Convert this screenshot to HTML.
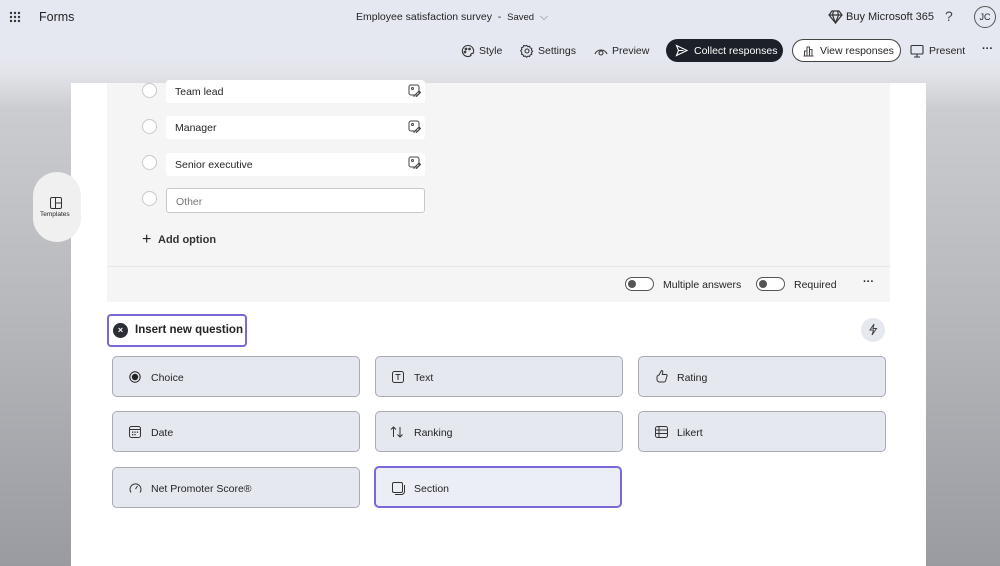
<!DOCTYPE html>
<html><head><meta charset="utf-8"><style>
*{box-sizing:border-box;margin:0;padding:0}
body{width:1000px;height:566px;overflow:hidden;font-family:"Liberation Sans",sans-serif;color:#242424;position:relative;background:linear-gradient(#e6e8f1 0,#e6e8f1 55px,#e2e3e8 75px,#cbccd0 110px,#b8b9bd 300px,#9a9ba1 566px)}
.abs{position:absolute}
.t{font-size:11px;white-space:nowrap}
.card{left:71px;top:83px;width:855px;height:483px;background:#fff}
.q{left:107px;top:83px;width:783px;height:219px;background:#f5f5f5}
.opt{left:166px;width:259px;height:23px;background:#fff;font-size:10.5px;padding:6px 9px;border-radius:3px}
.rad{left:142px;width:15px;height:15px;border:1px solid #c8c8c8;border-radius:50%;background:#fff}
.btn{width:248px;height:41px;background:#e6e8f0;border:1px solid #a9abb2;border-radius:5px;font-size:10.5px;padding:15px 0 0 38px}
.ic{position:absolute;left:16px;top:14px}
.tog{width:29px;height:14px;border:1px solid #555;border-radius:8px;background:#fff}
.tog:after{content:"";position:absolute;left:2px;top:2px;width:8px;height:8px;border-radius:50%;background:#555}
</style></head><body>
<svg class="abs" style="left:9px;top:11px" width="12" height="12"><g fill="#333"><circle cx="2" cy="2" r="1.2"/><circle cx="6" cy="2" r="1.2"/><circle cx="10" cy="2" r="1.2"/><circle cx="2" cy="6" r="1.2"/><circle cx="6" cy="6" r="1.2"/><circle cx="10" cy="6" r="1.2"/><circle cx="2" cy="10" r="1.2"/><circle cx="6" cy="10" r="1.2"/><circle cx="10" cy="10" r="1.2"/></g></svg>
<div class="abs t" style="left:39px;top:10px;font-size:12.5px">Forms</div>
<div class="abs t" style="left:356px;top:11px;font-size:10.5px">Employee satisfaction survey &nbsp;- &nbsp;<span style="font-size:9.5px">Saved</span> &nbsp;<span style="color:#777">⌵</span></div>
<svg class="abs" style="left:828px;top:10px" width="15" height="14" fill="none" stroke="#333" stroke-width="1.2"><path d="M4 1h7l3 4-6.5 8L1 5z M1 5h13 M5.5 1 4.5 5 7.5 13 10.5 5 9.5 1"/></svg>
<div class="abs t" style="left:846px;top:11px;font-size:11px">Buy Microsoft 365</div>
<div class="abs t" style="left:945px;top:8px;font-size:14px;color:#444">?</div>
<div class="abs" style="left:974px;top:6px;width:22px;height:22px;border:1px solid #555;border-radius:50%;font-size:9px;text-align:center;line-height:20px">JC</div>
<svg class="abs" style="left:461px;top:44px" width="14" height="14" fill="none" stroke="#333" stroke-width="1.1"><path d="M7 1.5a5.5 5.5 0 1 0 3 10c-1-1 .5-2.5 2-2A5.5 5.5 0 0 0 7 1.5z"/><circle cx="5" cy="5" r=".8"/><circle cx="8.5" cy="5" r=".8"/><circle cx="4" cy="8" r=".8"/></svg>
<div class="abs t" style="left:479px;top:45px;font-size:10.5px">Style</div>
<svg class="abs" style="left:520px;top:44px" width="14" height="14" fill="none" stroke="#333" stroke-width="1.1"><circle cx="7" cy="7" r="2"/><path d="M7 1.5l1.3 1.3 1.8-.4.6 1.7 1.7.6-.4 1.8L13.3 7.8l-1.3 1.3.4 1.8-1.7.6-.6 1.7-1.8-.4L7 14l-1.3-1.3-1.8.4-.6-1.7-1.7-.6.4-1.8L.7 7l1.3-1.3-.4-1.8 1.7-.6.6-1.7 1.8.4z" transform="scale(.95)"/></svg>
<div class="abs t" style="left:538px;top:45px;font-size:10.5px">Settings</div>
<svg class="abs" style="left:594px;top:46px" width="14" height="10" fill="none" stroke="#333" stroke-width="1.1"><path d="M1 8a6.5 6.5 0 0 1 12 0"/><circle cx="7" cy="7" r="2"/></svg>
<div class="abs t" style="left:612px;top:45px;font-size:10.5px">Preview</div>
<div class="abs" style="left:666px;top:39px;width:117px;height:23px;background:#1c2028;border-radius:12px"></div>
<svg class="abs" style="left:675px;top:44px" width="13" height="13" fill="none" stroke="#fff" stroke-width="1.1"><path d="M1.5 1.5 12 6.5 1.5 11.5 3.5 6.5z M3.5 6.5h5"/></svg>
<div class="abs t" style="left:694px;top:45px;font-size:10.5px;color:#fff">Collect responses</div>
<div class="abs" style="left:792px;top:39px;width:109px;height:23px;background:#fff;border:1px solid #444;border-radius:12px"></div>
<svg class="abs" style="left:802px;top:44px" width="13" height="13" fill="none" stroke="#444" stroke-width="1"><path d="M1.5 12h10 M2.5 12V7h2.5v5 M5 12V3h2.5v9 M7.5 12V5.5H10V12"/></svg>
<div class="abs t" style="left:820px;top:45px;font-size:10.5px">View responses</div>
<svg class="abs" style="left:910px;top:44px" width="14" height="14" fill="none" stroke="#333" stroke-width="1.1"><rect x="1" y="1.5" width="12" height="8.5" rx="1"/><path d="M7 10v2.5M4 13h6"/></svg>
<div class="abs t" style="left:929px;top:45px;font-size:10.5px">Present</div>
<div class="abs t" style="left:982px;top:43px;font-size:11px;font-weight:bold">···</div>

<div class="abs card"></div>
<div class="abs q"></div>
<div class="abs" style="left:107px;top:266px;width:783px;height:1px;background:#e6e6e6"></div>
<div class="abs" style="left:33px;top:172px;width:48px;height:70px;border-radius:24px;background:#f0f0f1"></div>
<svg class="abs" style="left:50px;top:197px" width="12" height="12" fill="none" stroke="#333" stroke-width="1"><rect x=".5" y=".5" width="11" height="11" rx="1.5"/><path d="M5.5 .5v11M5.5 6h6"/></svg>
<div class="abs t" style="left:40px;top:211px;font-size:6.5px">Templates</div>

<div class="abs rad" style="top:83px"></div><div class="abs opt" style="top:80px">Team lead</div>
<div class="abs rad" style="top:119px"></div><div class="abs opt" style="top:116px">Manager</div>
<div class="abs rad" style="top:155px"></div><div class="abs opt" style="top:153px">Senior executive</div>
<div class="abs rad" style="top:191px"></div><div class="abs opt" style="top:188px;height:25px;border:1px solid #c8c8c8;color:#777;padding-top:7px">Other</div>
<svg class="abs" style="left:408px;top:84px" width="13" height="13" fill="none" stroke="#444" stroke-width="1"><rect x="1" y="1" width="10" height="10" rx="2"/><path d="M6 12l5-5 1.5 1.5-5 5H6z"/><circle cx="4.5" cy="4.5" r="1"/></svg>
<svg class="abs" style="left:408px;top:120px" width="13" height="13" fill="none" stroke="#444" stroke-width="1"><rect x="1" y="1" width="10" height="10" rx="2"/><path d="M6 12l5-5 1.5 1.5-5 5H6z"/><circle cx="4.5" cy="4.5" r="1"/></svg>
<svg class="abs" style="left:408px;top:156px" width="13" height="13" fill="none" stroke="#444" stroke-width="1"><rect x="1" y="1" width="10" height="10" rx="2"/><path d="M6 12l5-5 1.5 1.5-5 5H6z"/><circle cx="4.5" cy="4.5" r="1"/></svg>
<div class="abs t" style="left:142px;top:231px;font-size:16px;font-weight:300">+</div>
<div class="abs t" style="left:158px;top:234px;font-size:11px;font-weight:bold;color:#333">Add option</div>

<div class="abs tog" style="left:625px;top:277px"></div>
<div class="abs t" style="left:663px;top:279px;font-size:10.5px">Multiple answers</div>
<div class="abs tog" style="left:756px;top:277px"></div>
<div class="abs t" style="left:794px;top:279px;font-size:10.5px">Required</div>
<div class="abs t" style="left:863px;top:276px;font-size:11px;font-weight:bold">···</div>

<div class="abs" style="left:107px;top:314px;width:140px;height:33px;border:2px solid #7b68d8;border-radius:4px;background:#fff"></div>
<div class="abs" style="left:113px;top:323px;width:15px;height:15px;border-radius:50%;background:#2b2e36;color:#fff;font-size:9px;text-align:center;line-height:15px;font-weight:bold">×</div>
<div class="abs t" style="left:135px;top:324px;font-size:11.5px;font-weight:bold">Insert new question</div>
<div class="abs" style="left:861px;top:318px;width:24px;height:24px;border-radius:50%;background:#e6e8f0"></div>
<svg class="abs" style="left:867px;top:323px" width="12" height="13" fill="none" stroke="#444" stroke-width="1"><path d="M7 1 3 7h3.5L5 12l4.5-6.5H6z"/></svg>

<div class="abs btn" style="left:112px;top:356px"><svg class="ic" width="12" height="12"><circle cx="6" cy="6" r="5.2" fill="none" stroke="#222"/><circle cx="6" cy="6" r="3.2" fill="#222"/></svg>Choice</div>
<div class="abs btn" style="left:375px;top:356px"><svg class="ic" width="12" height="12" fill="none" stroke="#333"><rect x=".5" y=".5" width="11" height="11" rx="2"/><path d="M3.5 3.5h5M6 3.5v5.5"/></svg>Text</div>
<div class="abs btn" style="left:638px;top:356px"><svg class="ic" style="top:12px" width="13" height="14" fill="none" stroke="#333"><path d="M4 6 6.5 1.5c1.2 0 1.5 1 1.2 2.3L7.3 5.5H11c.8 0 1.3.7 1 1.5L10.5 12c-.2.6-.7 1-1.3 1H4.5a2.5 2.5 0 0 1-2.5-2.5V8.5A2.5 2.5 0 0 1 4 6z"/></svg>Rating</div>
<div class="abs btn" style="left:112px;top:411px"><svg class="ic" width="12" height="12" fill="none" stroke="#333"><rect x=".5" y=".5" width="11" height="11" rx="2"/><path d="M.5 3.5h11"/><g fill="#333" stroke="none"><rect x="3" y="5.5" width="1.3" height="1.3"/><rect x="5.4" y="5.5" width="1.3" height="1.3"/><rect x="7.8" y="5.5" width="1.3" height="1.3"/><rect x="3" y="8" width="1.3" height="1.3"/><rect x="5.4" y="8" width="1.3" height="1.3"/></g></svg>Date</div>
<div class="abs btn" style="left:375px;top:411px"><svg class="ic" style="left:14px" width="14" height="12" fill="none" stroke="#333"><path d="M3.5 11V1M1 3.5 3.5 1 6 3.5M10 1v10M7.5 8.5 10 11l2.5-2.5"/></svg>Ranking</div>
<div class="abs btn" style="left:638px;top:411px"><svg class="ic" width="13" height="12" fill="none" stroke="#333"><rect x=".5" y=".5" width="12" height="11" rx="2"/><path d="M.5 4h12M.5 7.5h12M4 .5v11"/></svg>Likert</div>
<div class="abs btn" style="left:112px;top:467px"><svg class="ic" width="13" height="12" fill="none" stroke="#333"><path d="M2 10.5A5.5 5.5 0 1 1 11 10.5"/><path d="M6.5 7 8.5 4"/></svg>Net Promoter Score®</div>
<div class="abs btn" style="left:374px;top:466px;width:248px;height:42px;border:2px solid #7b68d8;background:#eceef5;padding-top:15px"><svg class="ic" width="13" height="13" fill="none" stroke="#333"><rect x=".5" y=".5" width="10" height="10" rx="1.5"/><path d="M3 12.5h6.5a3 3 0 0 0 3-3V3"/></svg>Section</div>
</body></html>
